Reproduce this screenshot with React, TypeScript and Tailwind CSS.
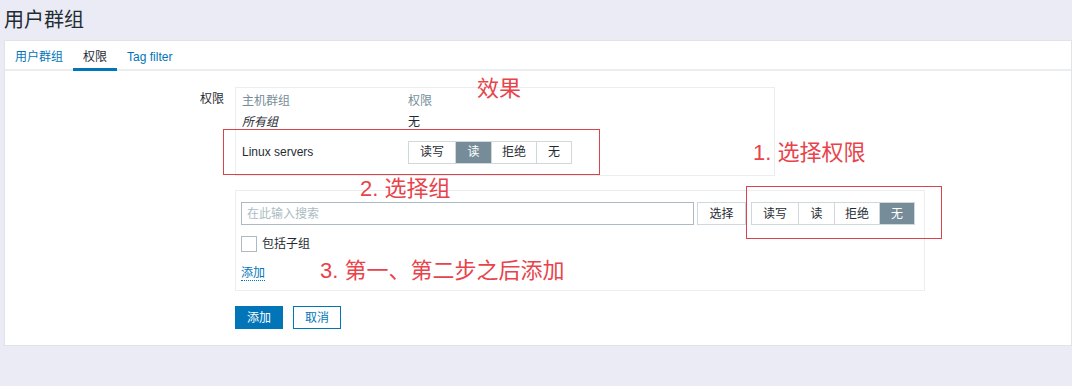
import React from "react";

const font = { fontFamily: '"Liberation Sans", "Noto Sans CJK SC", sans-serif' };

function Segmented({ active }: { active: number }) {
  const items = [
    { label: "读写", w: "w-[46px]" },
    { label: "读", w: "w-[36px]" },
    { label: "拒绝", w: "w-[45px]" },
    { label: "无", w: "w-[35px]" },
  ];
  return (
    <div className="flex h-[23px] border border-[#cfd8dc]">
      {items.map((it, i) => (
        <div
          key={it.label}
          className={`${it.w} flex items-center justify-center text-[12px] ${i > 0 ? "border-l border-[#cfd8dc]" : ""} ${
            i === active ? "bg-[#768d99] text-white" : "bg-white text-[#1f2c33]"
          }`}
        >
          {it.label}
        </div>
      ))}
    </div>
  );
}

export default function App() {
  return (
    <div className="relative w-[1072px] h-[386px] overflow-hidden bg-[#ebebf5] text-[#1f2c33]" style={font}>
      <div className="h-[40px] pl-[4px] pt-[6px] text-[20px] leading-[28px]">用户群组</div>

      <div className="ml-[4px] h-[306px] border border-[#dfe4e7] bg-white">
        {/* tabs */}
        <div className="flex h-[30px] border-b-2 border-[#ebeef0] text-[12px]">
          <div className="px-[10px] pt-[7px] text-[#0275b8]">用户群组</div>
          <div className="relative px-[10px] pt-[7px] text-[#1f2c33]">
            权限
            <div className="absolute left-0 right-0 bottom-[-2px] h-[3px] bg-[#0275b8]" />
          </div>
          <div className="px-[10px] pt-[7px] text-[#0275b8]">Tag filter</div>
        </div>

        {/* form */}
        <div className="flex pt-[16px] text-[12px]">
          <div className="w-[230px] pr-[11px] pt-[3px] text-right">权限</div>
          <div className="flex flex-col">
            <div className="w-[540px] h-[89px] border border-[#ebeef0] px-[6px] pt-[5px]">
              <div className="flex h-[16px] items-center text-[#768d99]">
                <div className="w-[166px]">主机群组</div>
                <div>权限</div>
              </div>
              <div className="flex h-[22px] items-center mt-[2px]">
                <div className="w-[166px] italic">所有组</div>
                <div>无</div>
              </div>
              <div className="flex h-[34px] items-center mt-[2px]">
                <div className="w-[166px]">Linux servers</div>
                <Segmented active={1} />
              </div>
            </div>

            <div className="mt-[14px] w-[690px] h-[101px] border border-[#ebeef0] px-[5px] pt-[11px]">
              <div className="flex items-center">
                <div className="w-[453px] h-[23px] border border-[#acbbc2] flex items-center px-[5px] text-[#acbbc2]">
                  在此输入搜索
                </div>
                <div className="ml-[3px] w-[49px] h-[23px] border border-[#cfd8dc] flex items-center justify-center">
                  选择
                </div>
                <div className="ml-[5px]">
                  <Segmented active={3} />
                </div>
              </div>
              <div className="flex items-center mt-[10px] h-[18px]">
                <div className="w-[16px] h-[16px] border border-[#acbbc2] bg-white" />
                <div className="ml-[5px]">包括子组</div>
              </div>
              <div className="mt-[11px] h-[16px]">
                <span className="text-[#0275b8] border-b border-dotted border-[#0275b8]">添加</span>
              </div>
            </div>

            <div className="flex mt-[15px] gap-[10px]">
              <div className="w-[48px] h-[23px] bg-[#0275b8] text-white flex items-center justify-center">添加</div>
              <div className="w-[48px] h-[23px] border border-[#0275b8] text-[#0275b8] flex items-center justify-center">
                取消
              </div>
            </div>
          </div>
        </div>
      </div>

      {/* annotations */}
      <div className="absolute left-[223px] top-[129px] w-[377px] h-[46px] border border-[#d9434b]" />
      <div className="absolute left-[746px] top-[186px] w-[196px] h-[53px] border border-[#d9434b]" />
      <div className="absolute left-[477px] top-[77px] text-[22px] leading-[24px] text-[#e8434b]">效果</div>
      <div className="absolute left-[753px] top-[141px] text-[22px] leading-[24px] text-[#e8434b]">1. 选择权限</div>
      <div className="absolute left-[360px] top-[177px] text-[22px] leading-[24px] text-[#e8434b]">2. 选择组</div>
      <div className="absolute left-[320px] top-[259px] text-[22px] leading-[24px] text-[#e8434b]">3. 第一、第二步之后添加</div>
    </div>
  );
}
